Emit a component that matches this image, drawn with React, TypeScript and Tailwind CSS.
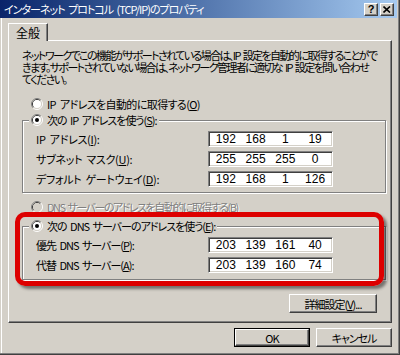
import type { ReactNode } from 'react'

const jp = "font-['Noto_Sans_CJK_JP',sans-serif] [font-feature-settings:'palt'] [word-spacing:2px]"

function Radio({ checked = false, disabled = false }: { checked?: boolean; disabled?: boolean }) {
  return (
    <svg width="12" height="12" viewBox="0 0 12 12" className="shrink-0">
      <path d="M2.11 9.89A5.5 5.5 0 0 1 9.89 2.11" fill="none" stroke="#808080" />
      <path d="M9.89 2.11A5.5 5.5 0 0 1 2.11 9.89" fill="none" stroke="#ffffff" />
      <path d="M2.82 9.18A4.5 4.5 0 0 1 9.18 2.82" fill="none" stroke="#404040" />
      <path d="M9.18 2.82A4.5 4.5 0 0 1 2.82 9.18" fill="none" stroke="#D4D0C8" />
      <circle cx="6" cy="6" r="4" fill={disabled ? '#D4D0C8' : '#ffffff'} />
      {checked && <circle cx="6" cy="6" r="2" fill={disabled ? '#808080' : '#000000'} />}
    </svg>
  )
}

function IpBox({ parts }: { parts: string[] }) {
  return (
    <div className="w-[125px] h-[16px] bg-white border border-t-[#808080] border-l-[#808080] border-r-white border-b-white shadow-[inset_1px_1px_0_#404040,inset_-1px_-1px_0_#D4D0C8] grid grid-cols-4 items-center px-[2px] font-['Liberation_Sans_Narrow','Liberation_Sans',sans-serif] text-[12px] leading-none tracking-normal text-black">
      {parts.map((p, i) => (
        <span key={i} className="text-center">{p}</span>
      ))}
    </div>
  )
}

function Row({ children, parts, labelClass = '' }: { children: ReactNode; parts: string[]; labelClass?: string }) {
  return (
    <div className="flex items-center">
      <div className={`w-[172px] whitespace-nowrap ${labelClass}`}>{children}</div>
      <IpBox parts={parts} />
    </div>
  )
}

function Group({ legend, children, className }: { legend: ReactNode; children: ReactNode; className: string }) {
  return (
    <div className={`${className} ml-[13px] mr-[5px] border border-[#808080] shadow-[inset_1px_1px_0_#fff,1px_1px_0_#fff] flex flex-col`}>
      <div className="-mt-[8px] ml-[6px] px-[2px] h-[14px] self-start bg-[#D4D0C8] flex items-center gap-[4px] whitespace-nowrap">
        <Radio checked />
        <span>{legend}</span>
      </div>
      {children}
    </div>
  )
}

function Button({ children, def = false, className = '' }: { children: ReactNode; def?: boolean; className?: string }) {
  return (
    <div className={`${className} h-[19px] flex items-center justify-center bg-[#D4D0C8] ${def ? 'border border-black' : ''}`}>
      <div className="w-full h-full flex items-center justify-center border border-t-white border-l-white border-r-[#404040] border-b-[#404040] shadow-[inset_-1px_-1px_0_#808080]">
        {children}
      </div>
    </div>
  )
}

export default function App() {
  return (
    <div className={`${jp} w-[400px] h-[355px] overflow-hidden bg-[#D4D0C8] text-[11px] leading-[12px] tracking-[-1px] text-black flex flex-col shadow-[inset_-1px_-1px_0_#404040,inset_-2px_-2px_0_#808080,inset_1px_0_0_#D4D0C8,inset_2px_0_0_#fff]`}>
      {/* title bar */}
      <div className="h-[18px] mr-[3px] bg-linear-to-r from-[#0A246A] to-[#A6CAF0] flex items-center pl-[4px] pr-[3px]">
        <span className="text-white whitespace-nowrap">インターネット プロトコル (TCP/IP)のプロパティ</span>
        <div className="ml-auto flex gap-[2px]">
          <div className="w-[14px] h-[13px] bg-[#D4D0C8] border border-t-white border-l-white border-r-[#404040] border-b-[#404040] shadow-[inset_-1px_-1px_0_#808080] flex items-center justify-center font-['Liberation_Sans',sans-serif] font-bold text-[11px] tracking-normal">?</div>
          <div className="w-[14px] h-[13px] bg-[#D4D0C8] border border-t-white border-l-white border-r-[#404040] border-b-[#404040] shadow-[inset_-1px_-1px_0_#808080] flex items-center justify-center">
            <svg width="8" height="7" viewBox="0 0 8 7">
              <path d="M0.5 0.5L7 6.5M7 0.5L0.5 6.5" stroke="#000" strokeWidth="1.6" />
            </svg>
          </div>
        </div>
      </div>

      <div className="flex flex-col pl-[8px] pr-[8px]">
        {/* tab */}
        <div className="mt-[5px] relative z-10 -mb-[1px] w-[40px] h-[18px] bg-[#D4D0C8] border-t border-l border-white border-r border-r-[#404040] shadow-[inset_-1px_0_0_#808080] pl-[7px] pt-[3px] text-[12px] tracking-normal">
          全般
        </div>

        {/* panel */}
        <div className="relative h-[283px] border border-t-white border-l-white border-r-[#404040] border-b-[#404040] shadow-[inset_-1px_-1px_0_#808080] flex flex-col">
          <p className="mt-[8px] ml-[13px] whitespace-nowrap tracking-[-1.6px]">
            ネットワークでこの機能がサポートされている場合は、IP 設定を自動的に取得することがで<br />
            きます。サポートされていない場合は、ネットワーク管理者に適切な IP 設定を問い合わせ<br />
            てください。
          </p>

          <div className="mt-[12px] ml-[22px] h-[14px] flex items-center gap-[4px] whitespace-nowrap tracking-[-0.6px]">
            <Radio />
            <span>IP アドレスを自動的に取得する(<span className="underline">O</span>)</span>
          </div>

          <Group className="mt-[9px] pb-[5px]" legend={<>次の IP アドレスを使う(<span className="underline">S</span>):</>}>
            <div className="mt-[4px] pl-[13px] flex flex-col gap-[4px]">
              <Row labelClass="tracking-[-0.3px]" parts={['192', '168', '1', '19']}>IP アドレス(<span className="underline">I</span>):</Row>
              <Row labelClass="tracking-[-0.3px]" parts={['255', '255', '255', '0']}>サブネット マスク(<span className="underline">U</span>):</Row>
              <Row labelClass="tracking-[-0.3px]" parts={['192', '168', '1', '126']}>デフォルト ゲートウェイ(<span className="underline">D</span>):</Row>
            </div>
          </Group>

          <div className="mt-[7px] ml-[22px] h-[14px] flex items-center gap-[4px] whitespace-nowrap tracking-[-1.5px] text-[#808080] [text-shadow:1px_1px_0_#fff]">
            <Radio disabled />
            <span>DNS サーバーのアドレスを自動的に取得する(B)</span>
          </div>

          <Group className="mt-[12px] pb-[6px]" legend={<>次の DNS サーバーのアドレスを使う(<span className="underline">E</span>):</>}>
            <div className="mt-[4px] pl-[13px] flex flex-col gap-[4px]">
              <Row parts={['203', '139', '161', '40']}>優先 DNS サーバー(<span className="underline">P</span>):</Row>
              <Row parts={['203', '139', '160', '74']}>代替 DNS サーバー(<span className="underline">A</span>):</Row>
            </div>
          </Group>

          <Button className="mt-[14px] self-end mr-[14px] w-[88px]">
            詳細設定(<span className="underline">V</span>)...
          </Button>

          {/* red annotation */}
          <div className="absolute left-[6px] top-[171px] w-[369px] h-[74px] rounded-[10px] border-[5px] border-[#DD0000] shadow-[3px_3px_3px_rgba(0,0,0,0.45)] pointer-events-none" />
        </div>

        {/* dialog buttons */}
        <div className="mt-[5px] flex justify-end gap-[6px]">
          <Button def className="w-[76px]">OK</Button>
          <Button className="w-[76px]">キャンセル</Button>
        </div>
      </div>
    </div>
  )
}
